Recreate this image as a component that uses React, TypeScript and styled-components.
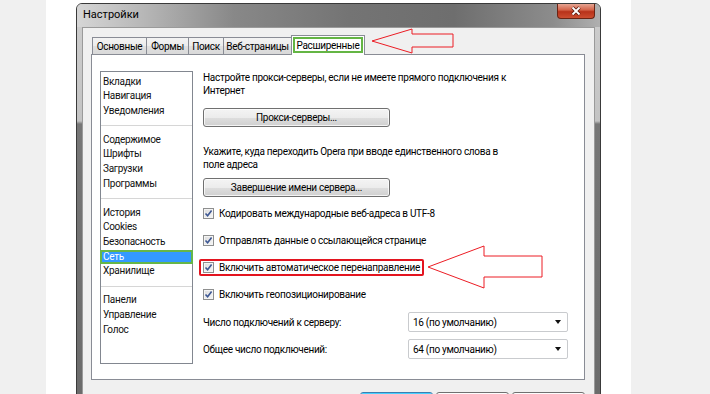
import React from 'react';
import styled, { createGlobalStyle, css } from 'styled-components';

const GlobalStyle = createGlobalStyle`
  html, body {
    margin: 0;
    padding: 0;
  }
  body {
    background: #f0f0f0;
    font-family: Roboto, "Noto Sans", sans-serif;
    color: #000;
    overflow: hidden;
  }
`;

const Page = styled.div`
  position: relative;
  width: 710px;
  height: 394px;
  overflow: hidden;
`;

const Column = styled.div`
  margin-left: 46px;
  width: 585px;
  height: 394px;
  box-sizing: border-box;
  padding: 3px 0 0 30px;
  background: #fff;
`;

const Window = styled.div`
  width: 525px;
  height: 430px;
  box-sizing: border-box;
  border: 1px solid #3a3a3a;
  border-radius: 6px 6px 0 0;
  overflow: hidden;
  display: flex;
  flex-direction: column;
  font-size: 10px;
  letter-spacing: -0.3px;
  background: linear-gradient(to bottom, #cdcdcd 0, #c4c4c4 117px, #777 120px, #6a6a6a 100%);
`;

const TitleBar = styled.div`
  height: 23px;
  flex-shrink: 0;
  display: flex;
  align-items: flex-start;
  background: linear-gradient(to right, #d6d6d6 0%, #b6b6b6 13%, #888 30%, #747474 52%, #6e6e6e 72%, #8c8c8c 91%, #b0b0b0 100%);
`;

const Title = styled.span`
  margin: 4px 0 0 6px;
  font-size: 11px;
  line-height: 14px;
  letter-spacing: 0;
`;

const CloseButton = styled.div`
  margin-left: auto;
  margin-right: 5px;
  width: 38px;
  height: 15px;
  box-sizing: border-box;
  border: 1px solid #6a2414;
  border-top: none;
  border-radius: 0 0 4px 4px;
  background: linear-gradient(to bottom, #e6a593 0%, #d4644a 42%, #b8321a 55%, #cc4d30 100%);
  display: flex;
  align-items: center;
  justify-content: center;
`;

const Client = styled.div`
  flex: 1;
  margin: 0 5px;
  border: 1px solid #9a9a9a;
  background: #f0f0f0;
  padding: 7px 9px 0 8px;
`;

const TabRow = styled.div`
  height: 19px;
  padding-left: 1px;
  display: flex;
  align-items: flex-end;
`;

const Tab = styled.div<{ $w: number; $active?: boolean }>`
  width: ${p => p.$w}px;
  height: 17px;
  box-sizing: border-box;
  margin-right: -1px;
  border: 1px solid #898c95;
  border-bottom: none;
  background: linear-gradient(to bottom, #f3f3f3 0%, #ececec 50%, #e0e0e0 51%, #d9d9d9 100%);
  display: flex;
  align-items: center;
  justify-content: center;
  ${p => p.$active && css`
    height: 20px;
    margin-bottom: -1px;
    position: relative;
    z-index: 1;
    background: #fff;
    padding: 1px 1px 2px;
  `}
`;

const TabLabel = styled.div<{ $active?: boolean }>`
  white-space: nowrap;
  ${p => p.$active && css`
    width: 100%;
    height: 100%;
    box-sizing: border-box;
    border: 2px solid #64b544;
    display: flex;
    align-items: center;
    justify-content: center;
  `}
`;

const TabPanel = styled.div`
  height: 326px;
  box-sizing: border-box;
  border: 1px solid #898c95;
  background: #fff;
  display: flex;
  padding: 16px 8px 0 8px;
`;

const ListBox = styled.div`
  width: 93px;
  height: 293px;
  flex-shrink: 0;
  box-sizing: border-box;
  border: 1px solid #828790;
  padding: 2.5px 0;
`;

const ListItem = styled.div<{ $selected?: boolean }>`
  height: 14.6px;
  line-height: 14.6px;
  padding-left: 2px;
  white-space: nowrap;
  color: #111;
  ${p => p.$selected && css`
    margin: 0 -1px;
    padding-left: 3px;
    background: #3399ff;
    color: #fff;
    box-shadow: inset 0 0 0 2px #66b648;
  `}
`;

const ListSeparator = styled.div`
  height: 14.6px;
  display: flex;
  align-items: center;
  &::after {
    content: '';
    flex: 1;
    height: 1px;
    background: #d6d6d6;
  }
`;

const Main = styled.div`
  margin-left: 10px;
  flex: 1;
  display: flex;
  flex-direction: column;
  align-items: flex-start;
`;

const Hint = styled.p<{ $top: number }>`
  margin: ${p => p.$top}px 0 0;
  line-height: 13px;
`;

const PushButton = styled.div<{ $top: number }>`
  margin-top: ${p => p.$top}px;
  width: 187px;
  height: 19px;
  box-sizing: border-box;
  border: 1px solid #707070;
  border-radius: 3px;
  background: linear-gradient(to bottom, #f4f4f4 0%, #ececec 50%, #dedede 51%, #d0d0d0 100%);
  box-shadow: inset 0 0 0 1px rgba(255, 255, 255, 0.75);
  display: flex;
  align-items: center;
  justify-content: center;
`;

const CheckRow = styled.div<{ $top: number; $marked?: boolean }>`
  margin: ${p => p.$top}px 0 0 -4px;
  height: 17px;
  box-sizing: border-box;
  padding: 2px 4px;
  display: flex;
  align-items: center;
  gap: 5px;
  border-radius: 2px;
  white-space: nowrap;
  ${p => p.$marked && css`
    box-shadow: inset 0 0 0 2px #e3141f;
  `}
`;

const CheckBox = styled.span`
  width: 11px;
  height: 11px;
  flex-shrink: 0;
  box-sizing: border-box;
  border: 1px solid #8e8f8f;
  background: linear-gradient(135deg, #dcdcdc 0%, #f6f6f6 100%);
  box-shadow: inset 0 0 0 1px #f4f4f4;
  display: flex;
  align-items: center;
  justify-content: center;
`;

const SelectRow = styled.div<{ $top: number }>`
  margin-top: ${p => p.$top}px;
  width: 365px;
  height: 20px;
  display: flex;
  align-items: center;
`;

const SelectLabel = styled.span`
  flex: 1;
`;

const Select = styled.div`
  width: 160px;
  height: 20px;
  box-sizing: border-box;
  border: 1px solid #c9cbce;
  border-radius: 2px;
  background: #fff;
  padding: 0 6px 0 4px;
  display: flex;
  align-items: center;
  justify-content: space-between;
  &::after {
    content: '';
    border-left: 3.5px solid transparent;
    border-right: 3.5px solid transparent;
    border-top: 4px solid #111;
  }
`;

const DialogButtons = styled.div`
  margin-top: 12px;
  display: flex;
  justify-content: flex-end;
  gap: 3px;
`;

const DialogButton = styled.div<{ $default?: boolean }>`
  width: 73px;
  height: 23px;
  box-sizing: border-box;
  border: 1px solid #707070;
  border-radius: 3px;
  background: linear-gradient(to bottom, #f4f4f4 0%, #ececec 50%, #dedede 51%, #d0d0d0 100%);
  box-shadow: inset 0 0 0 1px rgba(255, 255, 255, 0.8);
  ${p => p.$default && css`
    border-color: #3c7fb1;
    box-shadow: inset 0 0 0 1px #48d0ff;
  `}
`;

const Annotations = styled.svg`
  position: absolute;
  left: 0;
  top: 0;
  pointer-events: none;
`;

const Check = () => (
  <svg width="9" height="9" viewBox="0 0 9 9">
    <path d="M1.5 4.5 L3.6 6.8 L7.6 1.6" fill="none" stroke="#3d5793" strokeWidth="1.6" />
  </svg>
);

const tabs = [
  { label: 'Основные', w: 55 },
  { label: 'Формы', w: 43 },
  { label: 'Поиск', w: 36 },
  { label: 'Веб-страницы', w: 69 },
  { label: 'Расширенные', w: 74, active: true },
];

const sections = [
  ['Вкладки', 'Навигация', 'Уведомления'],
  ['Содержимое', 'Шрифты', 'Загрузки', 'Программы'],
  ['История', 'Cookies', 'Безопасность', 'Сеть', 'Хранилище'],
  ['Панели', 'Управление', 'Голос'],
];

const checks = [
  { text: 'Кодировать международные веб-адреса в UTF-8', top: 8 },
  { text: 'Отправлять данные о ссылающейся странице', top: 10 },
  { text: 'Включить автоматическое перенаправление', top: 10, marked: true },
  { text: 'Включить геопозиционирование', top: 10 },
];

export default function App() {
  return (
    <Page>
      <GlobalStyle />
      <Column>
        <Window>
          <TitleBar>
            <Title>Настройки</Title>
            <CloseButton>
              <svg width="14" height="10" viewBox="0 0 14 10">
                <path d="M3.5 1.5 L10.5 8.5 M10.5 1.5 L3.5 8.5" stroke="#5a1a0e" strokeWidth="3.4" />
                <path d="M3.5 1.5 L10.5 8.5 M10.5 1.5 L3.5 8.5" stroke="#fff" strokeWidth="1.8" />
              </svg>
            </CloseButton>
          </TitleBar>
          <Client>
            <TabRow>
              {tabs.map(t => (
                <Tab key={t.label} $w={t.w} $active={t.active}>
                  <TabLabel $active={t.active}>{t.label}</TabLabel>
                </Tab>
              ))}
            </TabRow>
            <TabPanel>
              <ListBox>
                {sections.map((group, i) => (
                  <React.Fragment key={i}>
                    {i > 0 && <ListSeparator />}
                    {group.map(item => (
                      <ListItem key={item} $selected={item === 'Сеть'}>{item}</ListItem>
                    ))}
                  </React.Fragment>
                ))}
              </ListBox>
              <Main>
                <Hint $top={0}>
                  Настройте прокси-серверы, если не имеете прямого подключения к<br />Интернет
                </Hint>
                <PushButton $top={11}>Прокси-серверы...</PushButton>
                <Hint $top={18}>
                  Укажите, куда переходить Opera при вводе единственного слова в<br />поле адреса
                </Hint>
                <PushButton $top={7}>Завершение имени сервера...</PushButton>
                {checks.map(c => (
                  <CheckRow key={c.text} $top={c.top} $marked={c.marked}>
                    <CheckBox><Check /></CheckBox>
                    {c.text}
                  </CheckRow>
                ))}
                <SelectRow $top={9}>
                  <SelectLabel>Число подключений к серверу:</SelectLabel>
                  <Select>16 (по умолчанию)</Select>
                </SelectRow>
                <SelectRow $top={7}>
                  <SelectLabel>Общее число подключений:</SelectLabel>
                  <Select>64 (по умолчанию)</Select>
                </SelectRow>
              </Main>
            </TabPanel>
            <DialogButtons>
              <DialogButton $default />
              <DialogButton />
              <DialogButton />
            </DialogButtons>
          </Client>
        </Window>
      </Column>
      <Annotations width="710" height="394">
        <polygon points="372,41 412,29 412,34 453,34 453,47 412,47 412,53" fill="none" stroke="#ec1c24" strokeWidth="1" />
        <polygon points="428,267 484,246 484,256 542,256 542,277 484,277 484,288" fill="none" stroke="#ec1c24" strokeWidth="1" />
      </Annotations>
    </Page>
  );
}
